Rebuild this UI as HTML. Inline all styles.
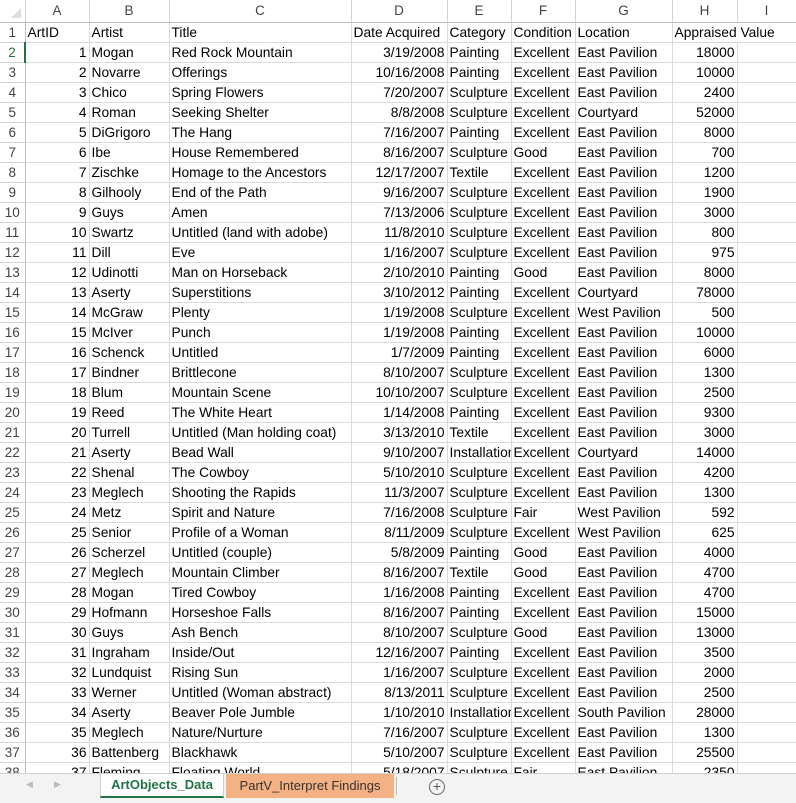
<!DOCTYPE html>
<html><head><meta charset="utf-8"><style>
*{margin:0;padding:0;box-sizing:border-box}
body{width:796px;height:803px;overflow:hidden;background:#fff;font-family:"Liberation Sans",Arial,sans-serif;font-size:13.8px;color:#000;position:relative}
#grid{position:absolute;left:0;top:0;width:796px;height:773px;overflow:hidden}
table{border-collapse:collapse;table-layout:fixed;width:796px}
td{height:20px;border-right:1px solid #dadada;border-bottom:1px solid #dadada;white-space:nowrap;overflow:hidden;padding:0 2px;line-height:19px}
td.r{text-align:right}
tr.h td{height:22px;background:#fff;color:#444;text-align:center;border-right:1px solid #d4d4d4;border-bottom:1px solid #bcbcbc;font-size:13.5px}
td.n{background:#fff;color:#444;text-align:center;border-right:1px solid #bcbcbc;border-bottom:1px solid #d4d4d4;padding:0;font-size:13.5px}
#tabs{position:absolute;left:0;top:773px;width:796px;height:30px;background:#f3f3f3;border-top:1px solid #d0d0d0}
.t1{position:absolute;left:100px;top:0;width:124px;height:24px;background:#fff;border-bottom:2px solid #217346;color:#217346;font-weight:bold;text-align:center;line-height:22px;font-size:13px;border-left:1px solid #ccc;border-right:1px solid #ccc}
.t2{position:absolute;left:226px;top:0;width:168px;height:24px;background:#f4b183;color:#333;text-align:center;line-height:24px;font-size:13px}
.sep{position:absolute;left:396px;top:3px;width:1px;height:18px;background:#bbb}
.plus{position:absolute;left:429px;top:5px;width:16px;height:16px;border:1px solid #666;border-radius:50%;color:#555;font-size:14px;line-height:13px;text-align:center}
.arr{position:absolute;top:5px;color:#bbb;font-size:9px}
</style></head><body>
<div id="grid"><table>
<colgroup><col style="width:25px"><col style="width:64px"><col style="width:80px"><col style="width:182px"><col style="width:96px"><col style="width:64px"><col style="width:64px"><col style="width:97px"><col style="width:65px"><col style="width:59px"></colgroup>
<tr class="h"><td style="background:#fff"><svg width="12" height="12" style="position:relative;top:4px;left:4px"><path d="M11 1 L11 11 L1 11Z" fill="#ddd"/></svg></td><td>A</td><td>B</td><td>C</td><td>D</td><td>E</td><td>F</td><td>G</td><td>H</td><td>I</td></tr>
<tr><td class="n">1</td><td>ArtID</td><td>Artist</td><td>Title</td><td>Date Acquired</td><td>Category</td><td>Condition</td><td>Location</td><td style="overflow:visible;border-right-color:transparent;position:relative;z-index:1">Appraised Value</td><td></td></tr>
<tr><td class="n" style="color:#217346;border-right:2px solid #217346">2</td><td class="r">1</td><td>Mogan</td><td>Red Rock Mountain</td><td class="r">3/19/2008</td><td>Painting</td><td>Excellent</td><td>East Pavilion</td><td class="r">18000</td><td></td></tr>
<tr><td class="n">3</td><td class="r">2</td><td>Novarre</td><td>Offerings</td><td class="r">10/16/2008</td><td>Painting</td><td>Excellent</td><td>East Pavilion</td><td class="r">10000</td><td></td></tr>
<tr><td class="n">4</td><td class="r">3</td><td>Chico</td><td>Spring Flowers</td><td class="r">7/20/2007</td><td>Sculpture</td><td>Excellent</td><td>East Pavilion</td><td class="r">2400</td><td></td></tr>
<tr><td class="n">5</td><td class="r">4</td><td>Roman</td><td>Seeking Shelter</td><td class="r">8/8/2008</td><td>Sculpture</td><td>Excellent</td><td>Courtyard</td><td class="r">52000</td><td></td></tr>
<tr><td class="n">6</td><td class="r">5</td><td>DiGrigoro</td><td>The Hang</td><td class="r">7/16/2007</td><td>Painting</td><td>Excellent</td><td>East Pavilion</td><td class="r">8000</td><td></td></tr>
<tr><td class="n">7</td><td class="r">6</td><td>Ibe</td><td>House Remembered</td><td class="r">8/16/2007</td><td>Sculpture</td><td>Good</td><td>East Pavilion</td><td class="r">700</td><td></td></tr>
<tr><td class="n">8</td><td class="r">7</td><td>Zischke</td><td>Homage to the Ancestors</td><td class="r">12/17/2007</td><td>Textile</td><td>Excellent</td><td>East Pavilion</td><td class="r">1200</td><td></td></tr>
<tr><td class="n">9</td><td class="r">8</td><td>Gilhooly</td><td>End of the Path</td><td class="r">9/16/2007</td><td>Sculpture</td><td>Excellent</td><td>East Pavilion</td><td class="r">1900</td><td></td></tr>
<tr><td class="n">10</td><td class="r">9</td><td>Guys</td><td>Amen</td><td class="r">7/13/2006</td><td>Sculpture</td><td>Excellent</td><td>East Pavilion</td><td class="r">3000</td><td></td></tr>
<tr><td class="n">11</td><td class="r">10</td><td>Swartz</td><td>Untitled (land with adobe)</td><td class="r">11/8/2010</td><td>Sculpture</td><td>Excellent</td><td>East Pavilion</td><td class="r">800</td><td></td></tr>
<tr><td class="n">12</td><td class="r">11</td><td>Dill</td><td>Eve</td><td class="r">1/16/2007</td><td>Sculpture</td><td>Excellent</td><td>East Pavilion</td><td class="r">975</td><td></td></tr>
<tr><td class="n">13</td><td class="r">12</td><td>Udinotti</td><td>Man on Horseback</td><td class="r">2/10/2010</td><td>Painting</td><td>Good</td><td>East Pavilion</td><td class="r">8000</td><td></td></tr>
<tr><td class="n">14</td><td class="r">13</td><td>Aserty</td><td>Superstitions</td><td class="r">3/10/2012</td><td>Painting</td><td>Excellent</td><td>Courtyard</td><td class="r">78000</td><td></td></tr>
<tr><td class="n">15</td><td class="r">14</td><td>McGraw</td><td>Plenty</td><td class="r">1/19/2008</td><td>Sculpture</td><td>Excellent</td><td>West Pavilion</td><td class="r">500</td><td></td></tr>
<tr><td class="n">16</td><td class="r">15</td><td>McIver</td><td>Punch</td><td class="r">1/19/2008</td><td>Painting</td><td>Excellent</td><td>East Pavilion</td><td class="r">10000</td><td></td></tr>
<tr><td class="n">17</td><td class="r">16</td><td>Schenck</td><td>Untitled</td><td class="r">1/7/2009</td><td>Painting</td><td>Excellent</td><td>East Pavilion</td><td class="r">6000</td><td></td></tr>
<tr><td class="n">18</td><td class="r">17</td><td>Bindner</td><td>Brittlecone</td><td class="r">8/10/2007</td><td>Sculpture</td><td>Excellent</td><td>East Pavilion</td><td class="r">1300</td><td></td></tr>
<tr><td class="n">19</td><td class="r">18</td><td>Blum</td><td>Mountain Scene</td><td class="r">10/10/2007</td><td>Sculpture</td><td>Excellent</td><td>East Pavilion</td><td class="r">2500</td><td></td></tr>
<tr><td class="n">20</td><td class="r">19</td><td>Reed</td><td>The White Heart</td><td class="r">1/14/2008</td><td>Painting</td><td>Excellent</td><td>East Pavilion</td><td class="r">9300</td><td></td></tr>
<tr><td class="n">21</td><td class="r">20</td><td>Turrell</td><td>Untitled (Man holding coat)</td><td class="r">3/13/2010</td><td>Textile</td><td>Excellent</td><td>East Pavilion</td><td class="r">3000</td><td></td></tr>
<tr><td class="n">22</td><td class="r">21</td><td>Aserty</td><td>Bead Wall</td><td class="r">9/10/2007</td><td>Installation</td><td>Excellent</td><td>Courtyard</td><td class="r">14000</td><td></td></tr>
<tr><td class="n">23</td><td class="r">22</td><td>Shenal</td><td>The Cowboy</td><td class="r">5/10/2010</td><td>Sculpture</td><td>Excellent</td><td>East Pavilion</td><td class="r">4200</td><td></td></tr>
<tr><td class="n">24</td><td class="r">23</td><td>Meglech</td><td>Shooting the Rapids</td><td class="r">11/3/2007</td><td>Sculpture</td><td>Excellent</td><td>East Pavilion</td><td class="r">1300</td><td></td></tr>
<tr><td class="n">25</td><td class="r">24</td><td>Metz</td><td>Spirit and Nature</td><td class="r">7/16/2008</td><td>Sculpture</td><td>Fair</td><td>West Pavilion</td><td class="r">592</td><td></td></tr>
<tr><td class="n">26</td><td class="r">25</td><td>Senior</td><td>Profile of a Woman</td><td class="r">8/11/2009</td><td>Sculpture</td><td>Excellent</td><td>West Pavilion</td><td class="r">625</td><td></td></tr>
<tr><td class="n">27</td><td class="r">26</td><td>Scherzel</td><td>Untitled (couple)</td><td class="r">5/8/2009</td><td>Painting</td><td>Good</td><td>East Pavilion</td><td class="r">4000</td><td></td></tr>
<tr><td class="n">28</td><td class="r">27</td><td>Meglech</td><td>Mountain Climber</td><td class="r">8/16/2007</td><td>Textile</td><td>Good</td><td>East Pavilion</td><td class="r">4700</td><td></td></tr>
<tr><td class="n">29</td><td class="r">28</td><td>Mogan</td><td>Tired Cowboy</td><td class="r">1/16/2008</td><td>Painting</td><td>Excellent</td><td>East Pavilion</td><td class="r">4700</td><td></td></tr>
<tr><td class="n">30</td><td class="r">29</td><td>Hofmann</td><td>Horseshoe Falls</td><td class="r">8/16/2007</td><td>Painting</td><td>Excellent</td><td>East Pavilion</td><td class="r">15000</td><td></td></tr>
<tr><td class="n">31</td><td class="r">30</td><td>Guys</td><td>Ash Bench</td><td class="r">8/10/2007</td><td>Sculpture</td><td>Good</td><td>East Pavilion</td><td class="r">13000</td><td></td></tr>
<tr><td class="n">32</td><td class="r">31</td><td>Ingraham</td><td>Inside/Out</td><td class="r">12/16/2007</td><td>Painting</td><td>Excellent</td><td>East Pavilion</td><td class="r">3500</td><td></td></tr>
<tr><td class="n">33</td><td class="r">32</td><td>Lundquist</td><td>Rising Sun</td><td class="r">1/16/2007</td><td>Sculpture</td><td>Excellent</td><td>East Pavilion</td><td class="r">2000</td><td></td></tr>
<tr><td class="n">34</td><td class="r">33</td><td>Werner</td><td>Untitled (Woman abstract)</td><td class="r">8/13/2011</td><td>Sculpture</td><td>Excellent</td><td>East Pavilion</td><td class="r">2500</td><td></td></tr>
<tr><td class="n">35</td><td class="r">34</td><td>Aserty</td><td>Beaver Pole Jumble</td><td class="r">1/10/2010</td><td>Installation</td><td>Excellent</td><td>South Pavilion</td><td class="r">28000</td><td></td></tr>
<tr><td class="n">36</td><td class="r">35</td><td>Meglech</td><td>Nature/Nurture</td><td class="r">7/16/2007</td><td>Sculpture</td><td>Excellent</td><td>East Pavilion</td><td class="r">1300</td><td></td></tr>
<tr><td class="n">37</td><td class="r">36</td><td>Battenberg</td><td>Blackhawk</td><td class="r">5/10/2007</td><td>Sculpture</td><td>Excellent</td><td>East Pavilion</td><td class="r">25500</td><td></td></tr>
<tr><td class="n">38</td><td class="r">37</td><td>Fleming</td><td>Floating World</td><td class="r">5/18/2007</td><td>Sculpture</td><td>Fair</td><td>East Pavilion</td><td class="r">2350</td><td></td></tr>
</table></div>
<div id="tabs">
<span class="arr" style="left:26px">&#9664;</span><span class="arr" style="left:54px">&#9654;</span>
<div class="t1">ArtObjects_Data</div>
<div class="t2">PartV_Interpret Findings</div>
<div class="sep"></div>
<div class="plus">+</div>
</div>
</body></html>
